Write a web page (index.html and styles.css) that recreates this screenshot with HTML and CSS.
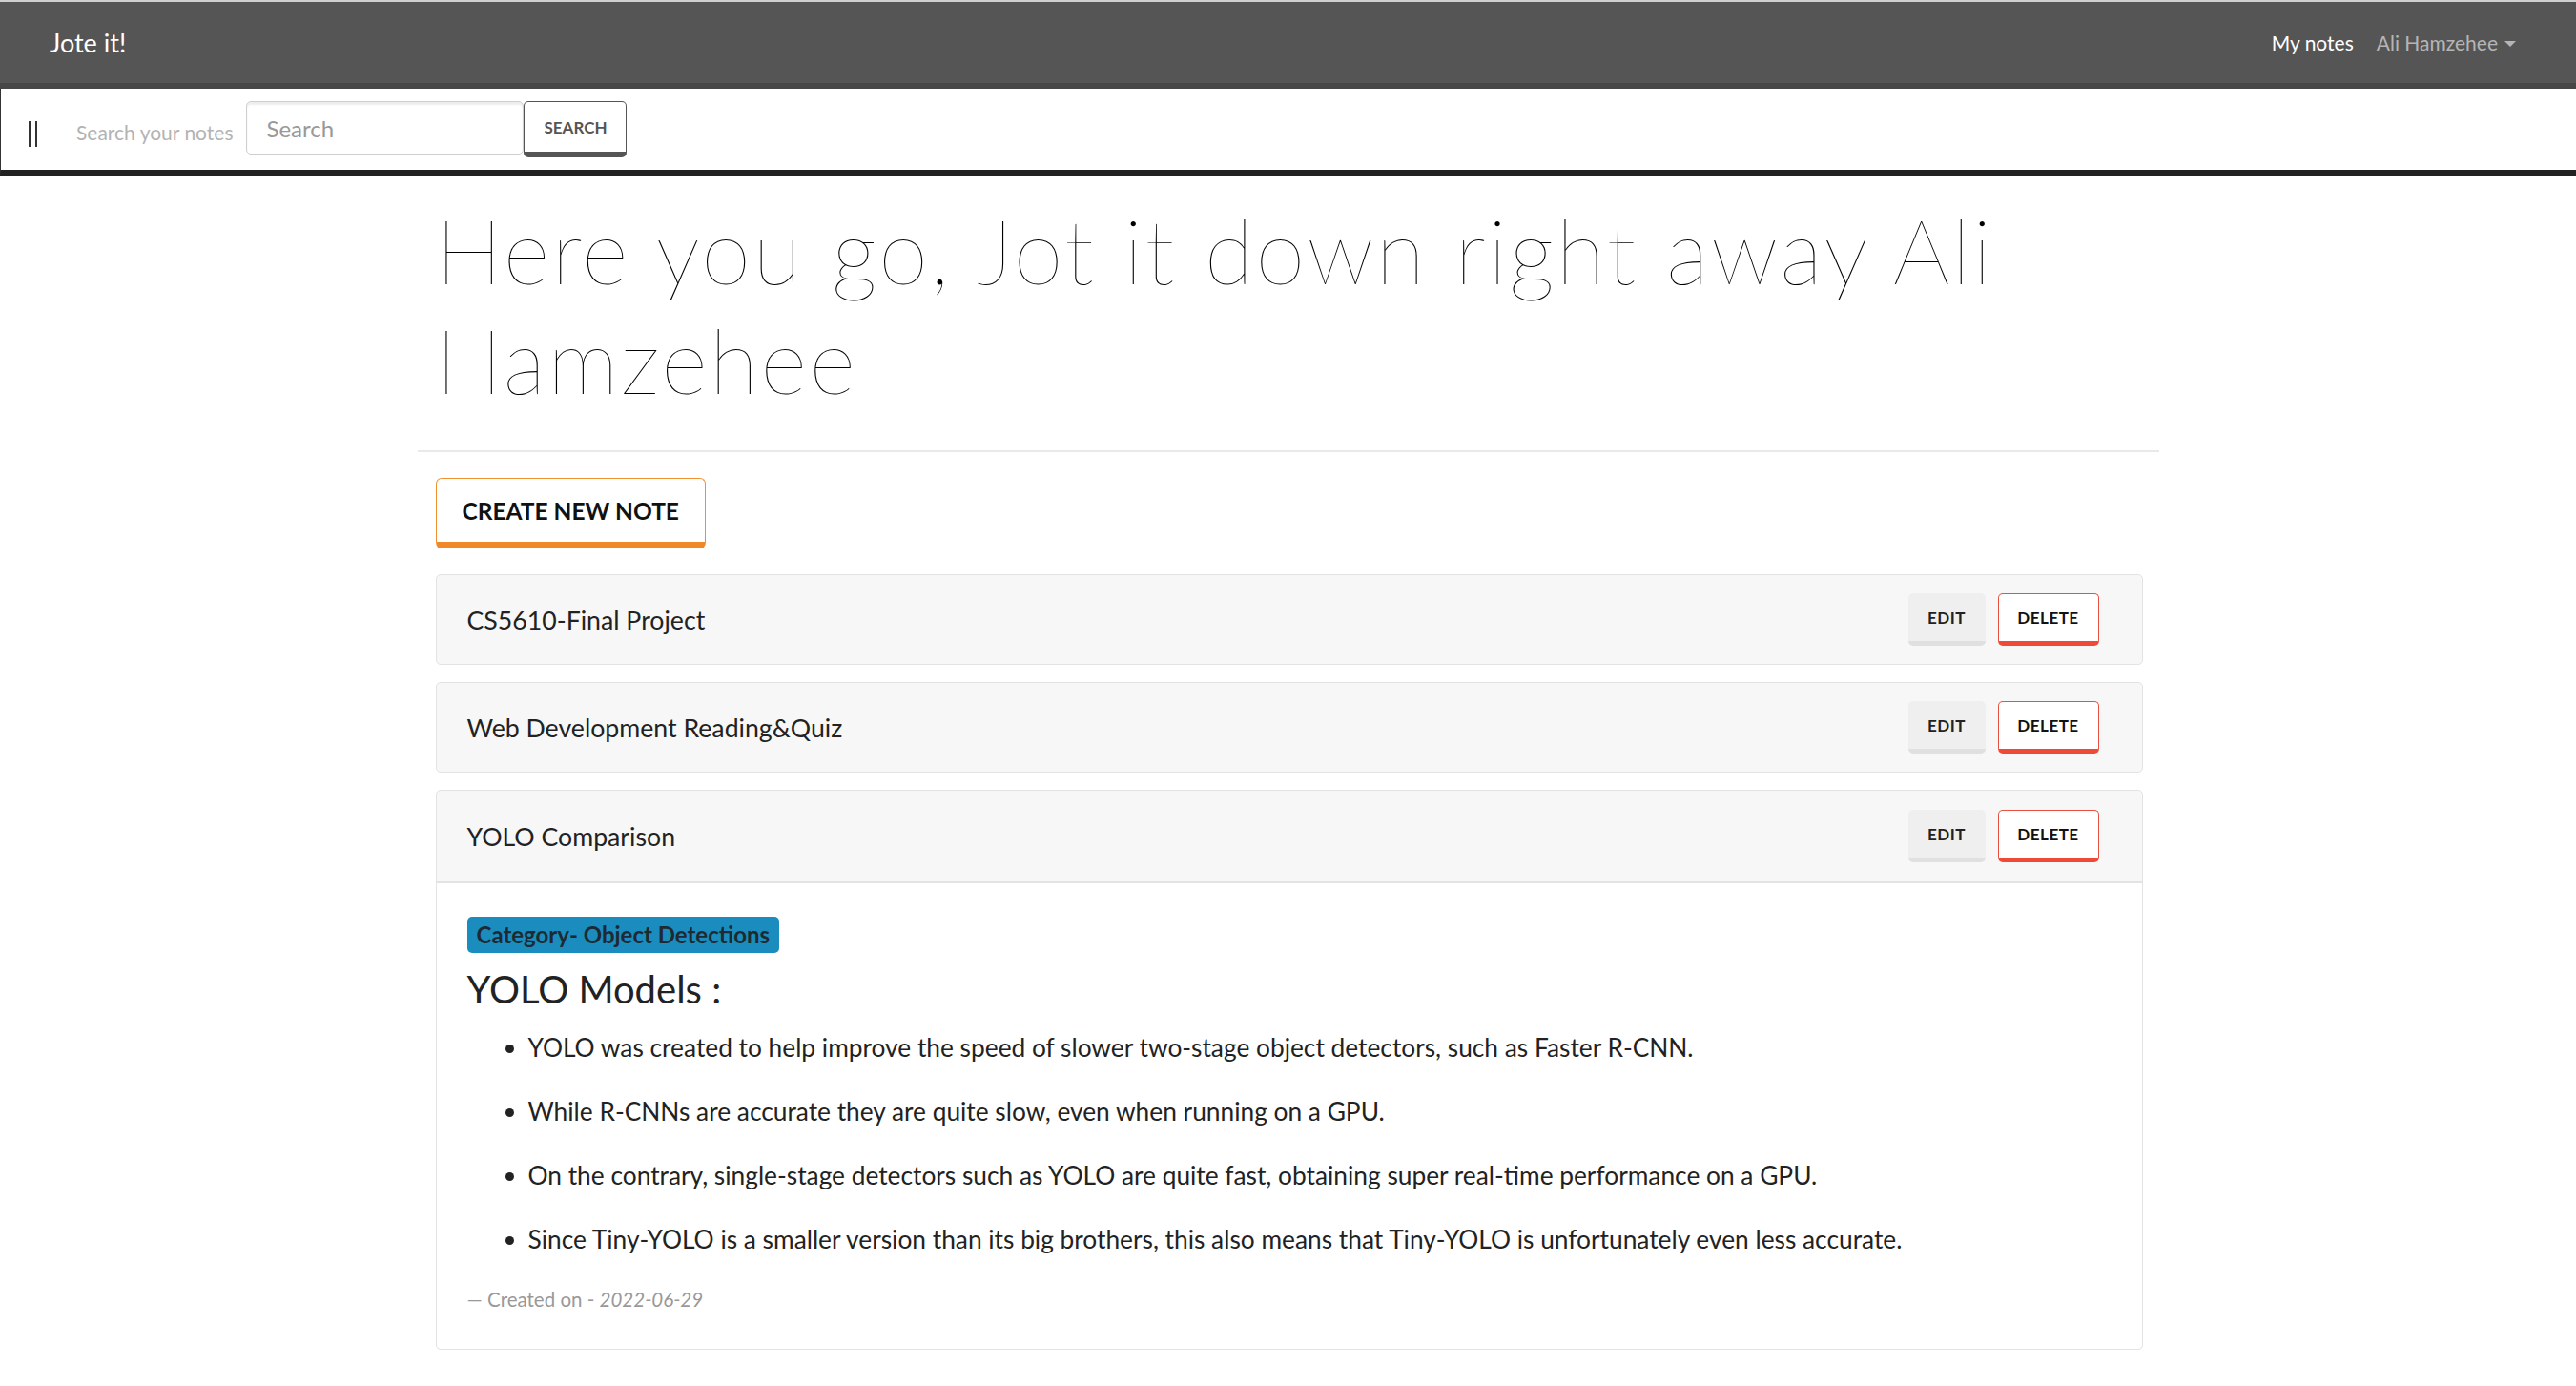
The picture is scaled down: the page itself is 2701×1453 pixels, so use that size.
FILE: index.html
```html
<!DOCTYPE html>
<html lang="en">
<head>
<meta charset="utf-8">
<title>Jote it!</title>
<link rel="stylesheet" href="styles.css">
</head>
<body>
<header class="topbar">
  <a class="brand" href="#">Jote it!</a>
  <nav class="topnav">
    <a class="topnav-link active" href="#">My notes</a>
    <a class="topnav-link user" href="#">Ali Hamzehee<span class="caret"></span></a>
  </nav>
</header>
<div class="searchbar">
  <span class="handle"></span>
  <span class="search-label">Search your notes</span>
  <form class="search-form">
    <input class="search-input" type="text" placeholder="Search">
    <button class="search-btn" type="button">SEARCH</button>
  </form>
</div>
<main class="main">
  <h1 class="headline">Here you go, Jot it down right away Ali Hamzehee</h1>
  <hr class="divider">
  <div class="content">
    <button class="btn-create" type="button">CREATE NEW NOTE</button>
    <div class="note">
      <div class="note-head">
        <span class="note-title">CS5610-Final Project</span>
        <div class="note-actions">
          <button class="btn-edit" type="button">EDIT</button>
          <button class="btn-delete" type="button">DELETE</button>
        </div>
      </div>
    </div>
    <div class="note">
      <div class="note-head">
        <span class="note-title">Web Development Reading&amp;Quiz</span>
        <div class="note-actions">
          <button class="btn-edit" type="button">EDIT</button>
          <button class="btn-delete" type="button">DELETE</button>
        </div>
      </div>
    </div>
    <div class="note open">
      <div class="note-head">
        <span class="note-title">YOLO Comparison</span>
        <div class="note-actions">
          <button class="btn-edit" type="button">EDIT</button>
          <button class="btn-delete" type="button">DELETE</button>
        </div>
      </div>
      <div class="note-body">
        <span class="badge">Category- Object Detections</span>
        <h3 class="note-heading">YOLO Models :</h3>
        <ul class="note-list">
          <li>YOLO was created to help improve the speed of slower two-stage object detectors, such as Faster R-CNN.</li>
          <li>While R-CNNs are accurate they are quite slow, even when running on a GPU.</li>
          <li>On the contrary, single-stage detectors such as YOLO are quite fast, obtaining super real-time performance on a GPU.</li>
          <li>Since Tiny-YOLO is a smaller version than its big brothers, this also means that Tiny-YOLO is unfortunately even less accurate.</li>
        </ul>
        <div class="created">— Created on - <em>2022-06-29</em></div>
      </div>
    </div>
  </div>
</main>
</body>
</html>
```

FILE: styles.css
```css
* { box-sizing: border-box; }
html, body { margin: 0; padding: 0; }
body {
  font-family: "Source Sans Pro", "Lato", "Liberation Sans", sans-serif;
  color: #222;
  background: #fff;
}
a { text-decoration: none; }

.topbar {
  height: 93px;
  background: #555;
  border-top: 2px solid #cfcfcf;
  border-bottom: 6px solid #474747;
  display: flex;
  align-items: center;
  justify-content: space-between;
  padding: 0 63px 0 52px;
}
.brand {
  color: #fff;
  font-size: 27px;
}
.topnav { display: flex; align-items: center; gap: 24px; }
.topnav-link { font-size: 21px; color: #b5b5b5; }
.topnav-link.active { color: #fff; }
.caret {
  display: inline-block;
  width: 0; height: 0;
  margin-left: 7px;
  vertical-align: 4px;
  border-left: 6px solid transparent;
  border-right: 6px solid transparent;
  border-top: 6px solid #b5b5b5;
}

.searchbar {
  height: 91px;
  border-left: 1px solid #333;
  border-bottom: 6px solid #222;
  display: flex;
  align-items: center;
  padding-left: 29px;
}
.handle {
  width: 9px;
  height: 27px;
  border-left: 2px solid #333;
  border-right: 2px solid #333;
  margin-top: 10px;
}
.search-label {
  color: #b3b3b3;
  font-size: 21px;
  margin-left: 41px;
  margin-right: 14px;
  margin-top: 6px;
}
.search-form { display: flex; align-items: flex-start; }
.search-input {
  width: 291px;
  height: 56px;
  border: 1px solid #cfcfcf;
  border-radius: 5px;
  box-shadow: inset 0 3px 2px rgba(0,0,0,0.07);
  padding: 0 20px;
  font-family: inherit;
  font-size: 24px;
  color: #555;
  outline: none;
}
.search-input::placeholder { color: #999; }
.search-btn {
  width: 108px;
  height: 59px;
  background: #fff;
  border: 1px solid #555;
  border-bottom: 6px solid #555;
  border-radius: 5px;
  font-family: inherit;
  font-weight: 700;
  font-size: 17px;
  color: #555;
  padding: 0;
}

.main {
  width: 1826px;
  margin: 0 auto;
}
.headline {
  margin: 20px 0 0;
  padding: 0 17px 0 19px;
  font-family: "Lato", "Liberation Sans", sans-serif;
  font-weight: 200;
  font-size: 94px;
  letter-spacing: 2.4px;
  line-height: 115px;
  color: #000;
}
.divider {
  margin: 38px 0 0;
  border: 0;
  border-top: 2px solid #e9e9e9;
}
.content {
  padding: 27px 17px 40px 19px;
  display: flex;
  flex-direction: column;
  align-items: stretch;
}
.btn-create {
  align-self: flex-start;
  height: 74px;
  padding: 0 27px;
  background: #fff;
  border: 1px solid #f0902f;
  border-bottom: 7px solid #f0882a;
  border-radius: 6px;
  font-family: inherit;
  font-weight: 700;
  font-size: 24.5px;
  color: #111;
  margin-bottom: 27px;
}

.note {
  background: #f7f7f7;
  border: 1px solid #e3e3e3;
  border-radius: 5px;
  margin-bottom: 18px;
}
.note-head {
  height: 93px;
  display: flex;
  align-items: center;
  justify-content: space-between;
  padding: 0 45px 0 32px;
}
.note.open .note-head {
  height: 97px;
  border-bottom: 2px solid #e3e3e3;
}
.note-title { font-size: 26.7px; color: #222; }
.note-actions { display: flex; gap: 13px; }
.btn-edit, .btn-delete {
  height: 55px;
  border-radius: 5px;
  font-family: inherit;
  font-weight: 700;
  font-size: 17px;
  letter-spacing: 0.5px;
  color: #222;
  padding: 0;
}
.btn-edit {
  width: 81px;
  background: #efefef;
  border: 0;
  border-bottom: 5px solid #e0e0e0;
}
.btn-delete {
  width: 106px;
  background: #fff;
  border: 1px solid #e8503f;
  border-bottom: 5px solid #ee4a38;
  color: #111;
}

.note-body {
  background: #fff;
  padding: 35px 32px 35px;
  border-radius: 0 0 5px 5px;
}
.badge {
  display: inline-block;
  height: 38px;
  line-height: 38px;
  padding: 0 10px;
  background: #1a8dbe;
  color: #1e2a33;
  border-radius: 5px;
  font-weight: 700;
  font-size: 24px;
}
.note-heading {
  margin: 13px 0 0;
  font-weight: 400;
  font-size: 40px;
  line-height: 50px;
  color: #222;
}
.note-list {
  margin: 16px 0 0;
  padding-left: 64px;
}
.note-list li {
  font-size: 26.3px;
  line-height: 40px;
  margin-bottom: 27px;
  color: #222;
}
.created {
  font-size: 20.5px;
  line-height: 33px;
  color: #999;
}
.created em { font-style: italic; }
```
